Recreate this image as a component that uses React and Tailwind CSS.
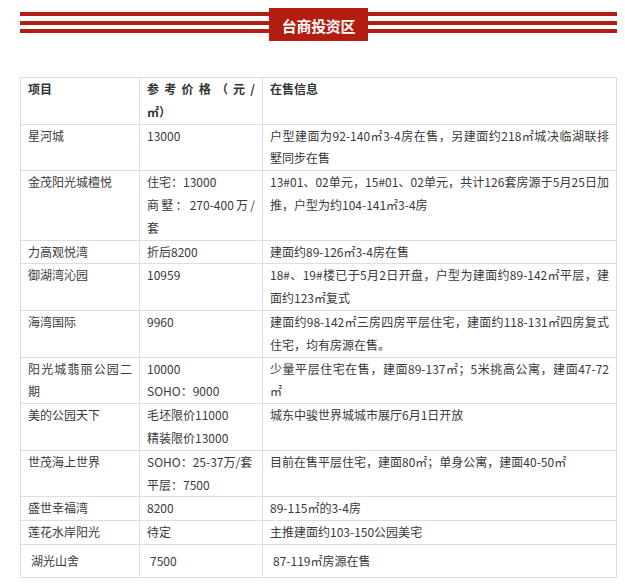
import React from "react";

const J = ({ children }) => (
  <div className="text-justify [text-align-last:justify]">{children}</div>
);
const L = ({ children }) => <div>{children}</div>;

const Bars = () => (
  <div className="flex-1 mt-[4px]">
    <div className="h-[4px] bg-[#b31d12]" />
    <div className="h-[4px] mt-[5px] bg-[#b31d12]" />
    <div className="h-[4px] mt-[4px] bg-[#b31d12]" />
  </div>
);

const rows = [
  {
    a: [<L>星河城</L>],
    b: [<L>13000</L>],
    c: [
      <J>户型建面为92-140㎡3-4房在售，另建面约218㎡城决临湖联排</J>,
      <L>墅同步在售</L>,
    ],
  },
  {
    a: [<L>金茂阳光城檀悦</L>],
    b: [<L>住宅：13000</L>, <J>商墅：270-400万/</J>, <L>套</L>],
    c: [
      <J>13#01、02单元，15#01、02单元，共计126套房源于5月25日加</J>,
      <L>推，户型为约104-141㎡3-4房</L>,
    ],
  },
  {
    a: [<L>力高观悦湾</L>],
    b: [<L>折后8200</L>],
    c: [<L>建面约89-126㎡3-4房在售</L>],
  },
  {
    a: [<L>御湖湾沁园</L>],
    b: [<L>10959</L>],
    c: [
      <J>18#、19#楼已于5月2日开盘，户型为建面约89-142㎡平层，建</J>,
      <L>面约123㎡复式</L>,
    ],
  },
  {
    a: [<L>海湾国际</L>],
    b: [<L>9960</L>],
    c: [
      <J>建面约98-142㎡三房四房平层住宅，建面约118-131㎡四房复式</J>,
      <L>住宅，均有房源在售。</L>,
    ],
  },
  {
    a: [<J>阳光城翡丽公园二</J>, <L>期</L>],
    b: [<L>10000</L>, <L>SOHO：9000</L>],
    c: [
      <J>少量平层住宅在售，建面89-137㎡；5米挑高公寓，建面47-72</J>,
      <L>㎡</L>,
    ],
  },
  {
    a: [<L>美的公园天下</L>],
    b: [<L>毛坯限价11000</L>, <L>精装限价13000</L>],
    c: [<L>城东中骏世界城城市展厅6月1日开放</L>],
  },
  {
    a: [<L>世茂海上世界</L>],
    b: [<L>SOHO：25-37万/套</L>, <L>平层：7500</L>],
    c: [<L>目前在售平层住宅，建面80㎡；单身公寓，建面40-50㎡</L>],
  },
  {
    a: [<L>盛世幸福湾</L>],
    b: [<L>8200</L>],
    c: [<L>89-115㎡的3-4房</L>],
  },
  {
    a: [<L>莲花水岸阳光</L>],
    b: [<L>待定</L>],
    c: [<L>主推建面约103-150公园美宅</L>],
  },
];

const cell = "border border-[#dedede] px-[7px] py-0 align-top";

export default function App() {
  return (
    <div
      lang="zh-CN"
      className="w-[625px] h-[586px] bg-white font-['Noto_Sans_CJK_SC',sans-serif] text-[#3a3a3a]"
    >
      <div className="ml-[20px] w-[597px] pt-[8px] flex items-start">
        <Bars />
        <div className="w-[99px] h-[33px] bg-[#b31c11] flex items-center justify-center text-white font-bold text-[15px] leading-none tracking-[-0.3px] pt-[1px]">
          台商投资区
        </div>
        <Bars />
      </div>

      <table className="ml-[20px] mt-[36px] w-[597px] border-collapse table-fixed text-[12px] leading-[22.8px]">
        <colgroup>
          <col className="w-[119px]" />
          <col className="w-[123px]" />
          <col />
        </colgroup>
        <tbody>
          <tr className="font-bold text-[#333]">
            <td className={cell}>
              <L>项目</L>
            </td>
            <td className={cell}>
              <J>参考价格（元/</J>
              <L>㎡）</L>
            </td>
            <td className={cell}>
              <L>在售信息</L>
            </td>
          </tr>
          {rows.map((r, i) => (
            <tr key={i}>
              <td className={cell}>{r.a.map((x, k) => <React.Fragment key={k}>{x}</React.Fragment>)}</td>
              <td className={cell}>{r.b.map((x, k) => <React.Fragment key={k}>{x}</React.Fragment>)}</td>
              <td className={cell}>{r.c.map((x, k) => <React.Fragment key={k}>{x}</React.Fragment>)}</td>
            </tr>
          ))}
          <tr>
            <td className="border border-[#dedede] pl-[10px] pr-[7px] pt-[5px] pb-[4px] align-top">
              湖光山舍
            </td>
            <td className="border border-[#dedede] pl-[10px] pr-[7px] pt-[5px] pb-[4px] align-top">
              7500
            </td>
            <td className="border border-[#dedede] pl-[10px] pr-[7px] pt-[5px] pb-[4px] align-top">
              87-119㎡房源在售
            </td>
          </tr>
        </tbody>
      </table>
    </div>
  );
}
